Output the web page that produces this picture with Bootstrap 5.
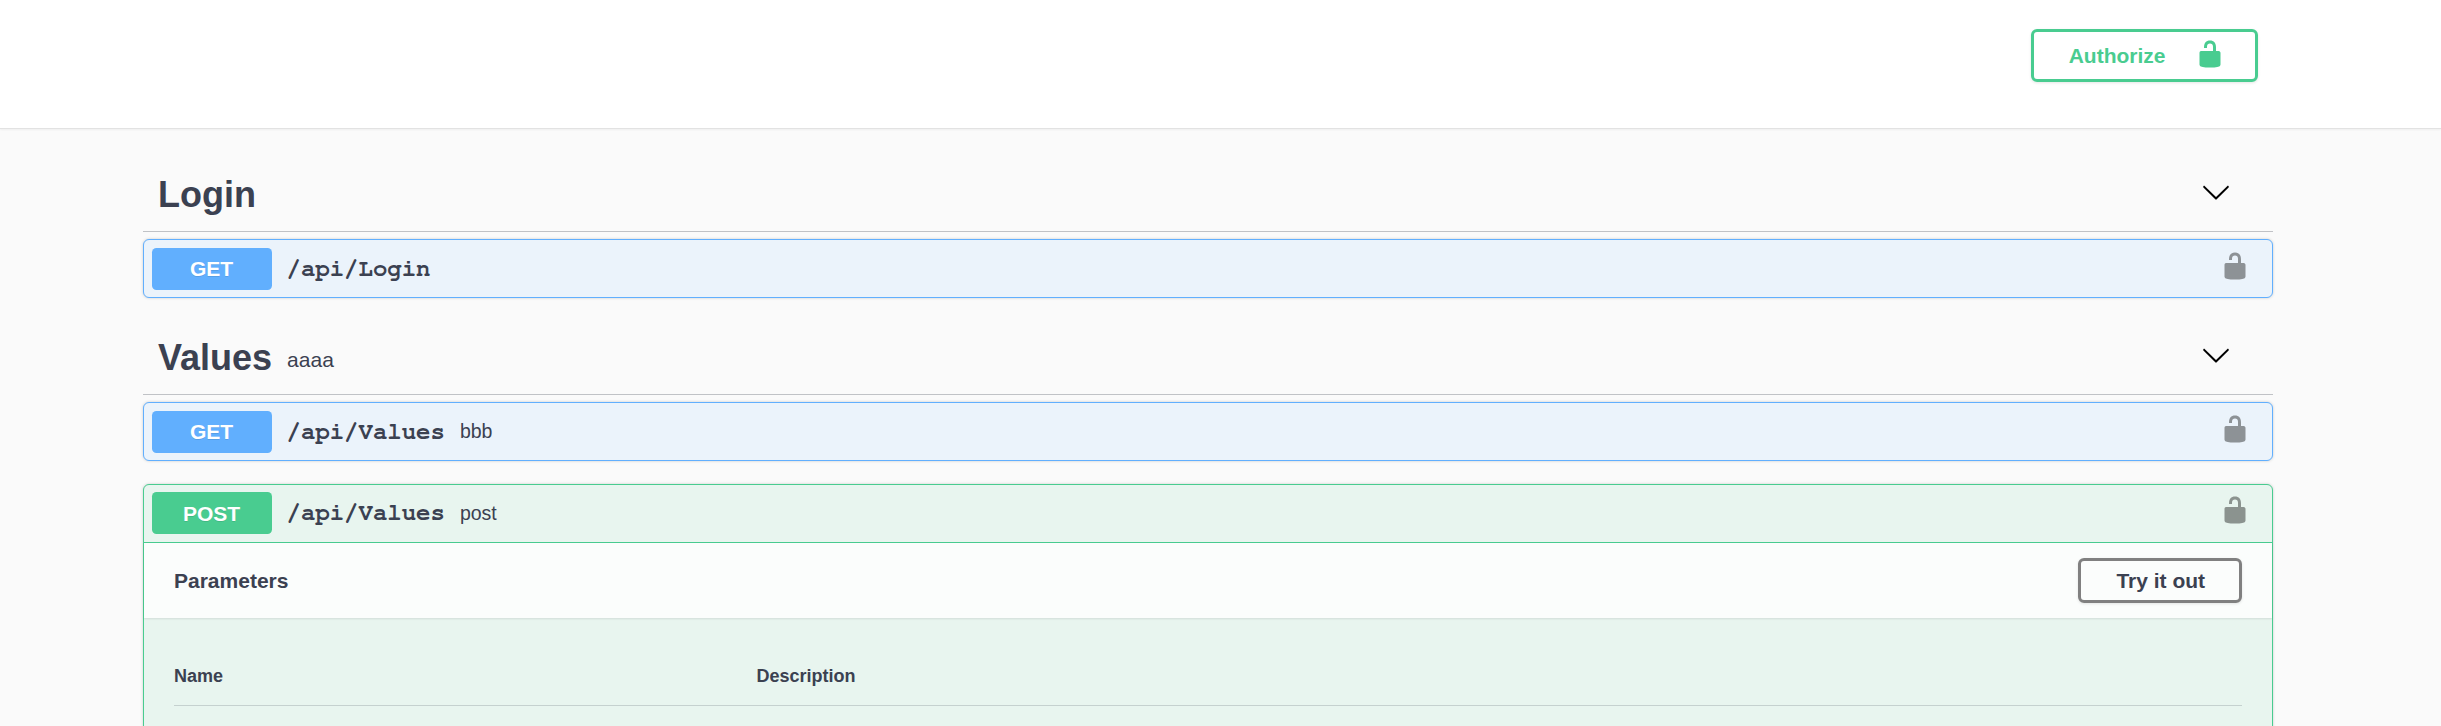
<!DOCTYPE html>
<html lang="en">
<head>
    <meta charset="UTF-8">
    <meta name="viewport" content="width=device-width, initial-scale=1.0">
    <title>Swagger UI</title>
    <link rel="stylesheet" href="https://cdn.jsdelivr.net/npm/bootstrap@5.3.0/dist/css/bootstrap.min.css">
    <style>
        html, body {
            height: 726px;
            overflow: hidden;
        }
        body {
            background-color: #fafafa;
            font-family: "Liberation Sans", Arial, sans-serif;
            color: #3b4151;
        }
        .top-panel {
            height: 129px;
            padding: 29px 183px 0 0;
            background: #fff;
            border-bottom: 1px solid #e2e2e2;
            box-shadow: 0 1px 2px rgba(0, 0, 0, .05);
        }
        .btn-authorize {
            height: 53px;
            padding: 0 30px 0 35px;
            font-size: 21px;
            font-weight: 700;
            color: #49cc90;
            background: transparent;
            border: 3px solid #49cc90;
            border-radius: 6px;
            box-shadow: 0 1px 3px rgba(0, 0, 0, .1);
        }
        .btn-authorize svg {
            margin: -3px 0 0 29.5px;
            fill: #49cc90;
        }
        .api-wrap {
            width: 2130px;
            margin-left: 143px;
            padding-top: 28px;
        }
        .tag-head {
            height: 75px;
            margin-bottom: 7px;
            padding: 0 42px 0 15px;
            border-bottom: 1px solid rgba(59, 65, 81, .3);
        }
        .tag-arrow {
            margin: -4px 0 0 auto;
        }
        .tag-name {
            margin: 2px 0 0;
            font-size: 36px;
            font-weight: 700;
            line-height: 1;
        }
        .tag-note {
            margin-left: 15px;
            font-size: 21px;
            line-height: 1;
            padding-top: 4px;
        }
        .op-block {
            margin-bottom: 22.4px;
            border: 1px solid;
            border-radius: 6px;
            box-shadow: 0 0 3px rgba(0, 0, 0, .19);
        }
        .op-get {
            background: #ebf3fb;
            border-color: #61affe;
        }
        .op-post {
            background: #e8f5ef;
            border-color: #49cc90;
        }
        .op-summary {
            height: 57px;
            padding: 7.5px 22px 7.5px 7.5px;
        }
        .op-post .op-summary {
            border-bottom: 1px solid #49cc90;
            height: 58px;
        }
        .verb {
            width: 120px;
            height: 42px;
            font-size: 21px;
            font-weight: 700;
            color: #fff;
            border-radius: 4.5px;
            text-shadow: 0 1px 0 rgba(0, 0, 0, .1);
        }
        .op-get .verb {
            background: #61affe;
        }
        .op-post .verb {
            background: #49cc90;
        }
        .op-path {
            margin-left: 15px;
            font-family: FreeMono, "Courier New", monospace;
            font-size: 24px;
            font-weight: 700;
        }
        .op-note {
            margin-left: 15px;
            font-size: 19.5px;
        }
        .lock-ico {
            margin: -6px 0 0 auto;
            fill: rgba(0, 0, 0, .4);
        }
        .params-bar {
            height: 75px;
            padding: 0 30px;
            background: rgba(255, 255, 255, .8);
            box-shadow: 0 1px 2px rgba(0, 0, 0, .1);
        }
        .params-title {
            font-size: 21px;
            font-weight: 700;
        }
        .btn-try {
            width: 164px;
            height: 45px;
            padding: 0 0 0 1.5px;
            font-size: 21px;
            font-weight: 700;
            color: #3b4151;
            background: transparent;
            border: 3px solid #808080;
            border-radius: 6px;
            box-shadow: 0 1px 3px rgba(0, 0, 0, .1);
        }
        .params-body {
            padding: 30px 30px 60px;
        }
        .params-cols {
            height: 58px;
            font-size: 18px;
            font-weight: 700;
            border-bottom: 1px solid rgba(59, 65, 81, .2);
        }
        .col-name {
            width: 582.5px;
        }
    </style>
</head>
<body>

    <svg class="d-none">
        <symbol id="lockOpen" viewBox="0 0 20 20">
            <path d="M15.8 8H14V5.6C14 2.703 12.665 1 10 1 7.334 1 6 2.703 6 5.6V6h2v-.801C8 3.754 8.797 3 10 3c1.203 0 2 .754 2 2.199V8H4c-.553 0-1 .646-1 1.199V17c0 .549.428 1.139.951 1.307l1.197.387C5.672 18.861 6.55 19 7.1 19h5.8c.549 0 1.428-.139 1.951-.307l1.196-.387c.524-.167.953-.757.953-1.306V9.199C17 8.646 16.352 8 15.8 8z"/>
        </symbol>
        <symbol id="arrowDown" viewBox="0 0 20 20">
            <path d="M17.418 6.109c.272-.268.709-.268.979 0s.271.701 0 .969l-7.908 7.83c-.27.268-.707.268-.979 0l-7.908-7.83c-.27-.268-.27-.701 0-.969.271-.268.709-.268.979 0L10 13.25l7.418-7.141z"/>
        </symbol>
    </svg>

    <div class="top-panel d-flex justify-content-end align-items-start">
        <button class="btn btn-authorize d-flex align-items-center">
            <span>Authorize</span>
            <svg width="30" height="30"><use href="#lockOpen"/></svg>
        </button>
    </div>

    <div class="api-wrap">
        <div class="tag-head d-flex align-items-center">
            <h3 class="tag-name">Login</h3>
            <svg class="tag-arrow" width="30" height="30"><use href="#arrowDown"/></svg>
        </div>
        <div class="op-block op-get">
            <div class="op-summary d-flex align-items-center">
                <div class="verb d-flex align-items-center justify-content-center">GET</div>
                <span class="op-path">/api/Login</span>
                <svg class="lock-ico" width="30" height="30"><use href="#lockOpen"/></svg>
            </div>
        </div>

        <div class="tag-head d-flex align-items-center">
            <h3 class="tag-name">Values</h3>
            <span class="tag-note">aaaa</span>
            <svg class="tag-arrow" width="30" height="30"><use href="#arrowDown"/></svg>
        </div>
        <div class="op-block op-get">
            <div class="op-summary d-flex align-items-center">
                <div class="verb d-flex align-items-center justify-content-center">GET</div>
                <span class="op-path">/api/Values</span>
                <span class="op-note">bbb</span>
                <svg class="lock-ico" width="30" height="30"><use href="#lockOpen"/></svg>
            </div>
        </div>
        <div class="op-block op-post">
            <div class="op-summary d-flex align-items-center">
                <div class="verb d-flex align-items-center justify-content-center">POST</div>
                <span class="op-path">/api/Values</span>
                <span class="op-note">post</span>
                <svg class="lock-ico" width="30" height="30"><use href="#lockOpen"/></svg>
            </div>
            <div class="params-bar d-flex align-items-center justify-content-between">
                <span class="params-title">Parameters</span>
                <button class="btn btn-try">Try it out</button>
            </div>
            <div class="params-body">
                <div class="params-cols d-flex align-items-center">
                    <div class="col-name">Name</div>
                    <div>Description</div>
                </div>
            </div>
        </div>
    </div>

    <script src="https://cdn.jsdelivr.net/npm/bootstrap@5.3.0/dist/js/bootstrap.bundle.min.js"></script>
</body>
</html>
